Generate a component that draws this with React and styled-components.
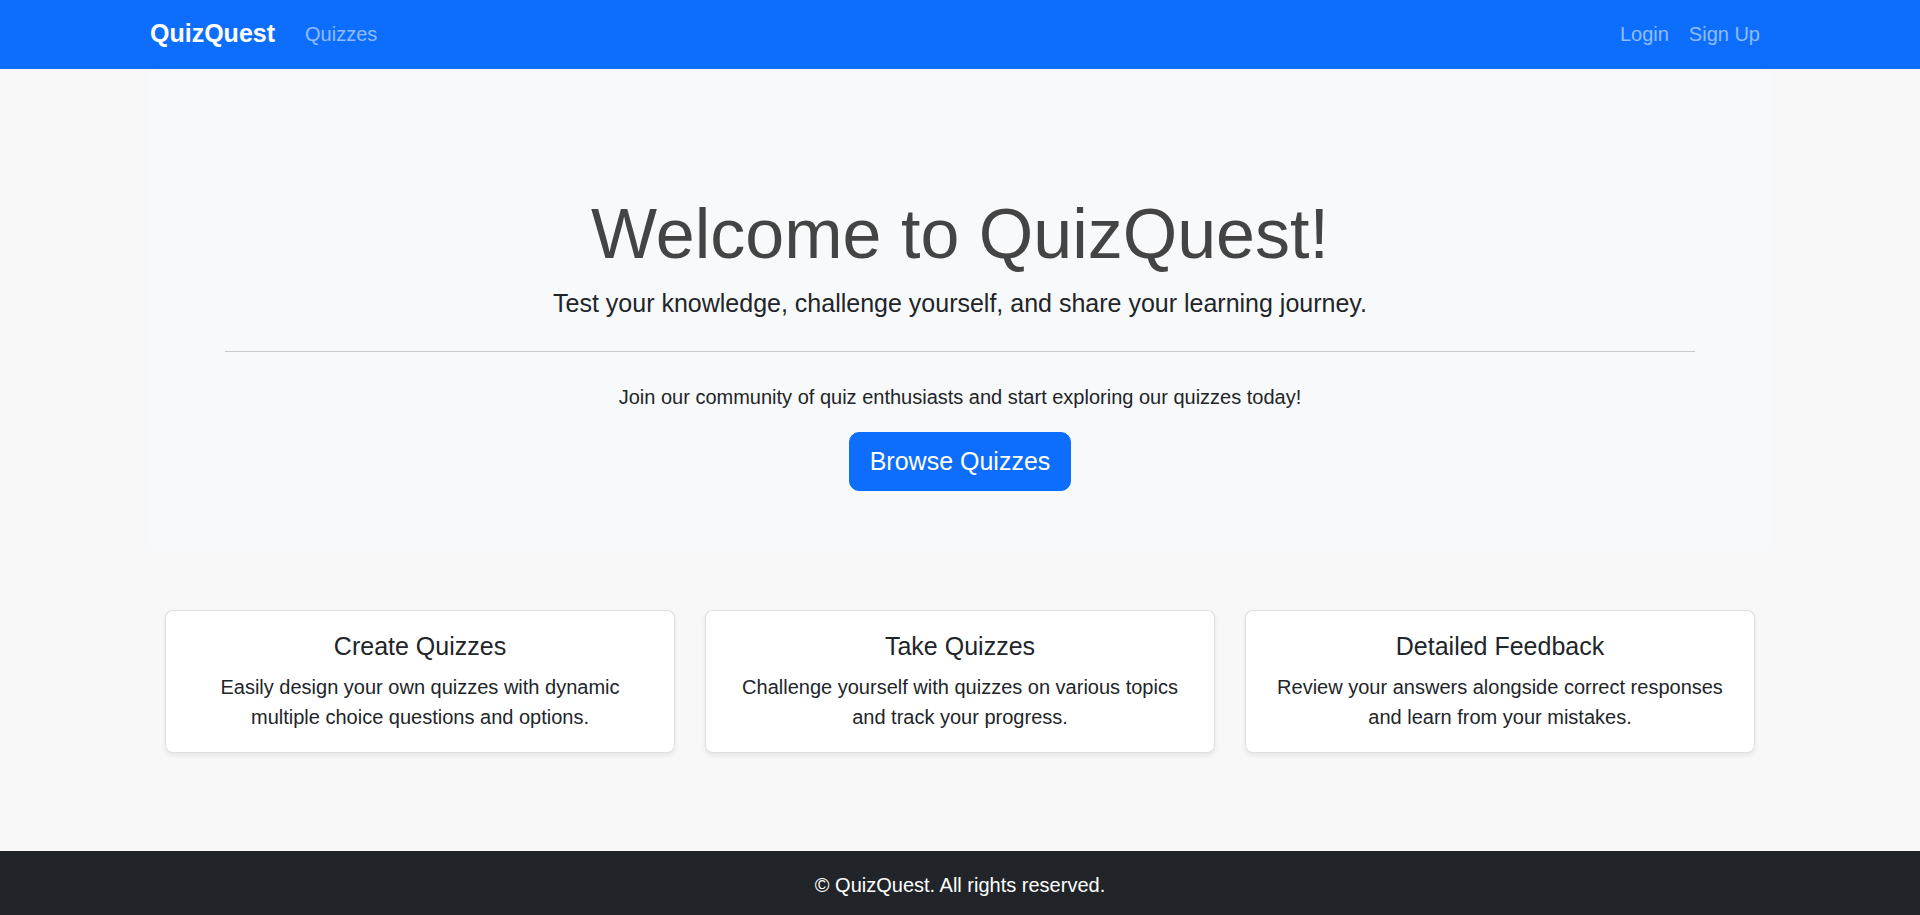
import React from "react";
import styled, { createGlobalStyle } from "styled-components";

const GlobalStyle = createGlobalStyle`
  * { box-sizing: border-box; }
  body {
    margin: 0;
    font-family: "Liberation Sans", Arial, sans-serif;
    color: #212529;
    background: #f8f8f8;
  }
`;

const Page = styled.div`
  min-height: 100vh;
  display: flex;
  flex-direction: column;
`;

const Navbar = styled.nav`
  height: 69px;
  background: #0d6efd;
`;

const NavInner = styled.div`
  width: 1650px;
  margin: 0 auto;
  padding: 0 15px 2px;
  height: 100%;
  display: flex;
  align-items: center;
`;

const Brand = styled.a`
  color: #fff;
  font-size: 25px;
  font-weight: 700;
  line-height: 1.5;
  margin-right: 20px;
  text-decoration: none;
`;

const NavLinks = styled.div`
  display: flex;
  align-items: center;
  margin-left: ${({ $right }) => ($right ? "auto" : "0")};
`;

const NavLink = styled.a`
  color: rgba(255, 255, 255, 0.55);
  font-size: 20px;
  line-height: 1.5;
  padding: 0 10px;
  text-decoration: none;
`;

const Main = styled.main`
  flex: 1;
`;

const Container = styled.div`
  width: 1650px;
  margin: 0 auto;
  padding: 0 15px;
`;

const Hero = styled.section`
  background: #f8f9fa;
  padding: 123px 75px 60px;
  text-align: center;
`;

const Title = styled.h1`
  margin: 0 0 9px;
  font-size: 70px;
  font-weight: 300;
  line-height: 1.2;
  color: #444;
`;

const Lead = styled.p`
  margin: 0;
  font-size: 25px;
  line-height: 1.5;
  color: #212529;
`;

const Rule = styled.hr`
  margin: 28px 0 30px;
  border: 0;
  border-top: 1px solid #c8c9ca;
`;

const Text = styled.p`
  margin: 0 0 20px;
  font-size: 20px;
  line-height: 1.5;
`;

const Button = styled.a`
  display: inline-block;
  background: #0d6efd;
  color: #fff;
  font-size: 25px;
  line-height: 1.5;
  padding: 10px 20px;
  border: 1px solid #0d6efd;
  border-radius: 10px;
  text-decoration: none;
`;

const Features = styled.div`
  display: grid;
  grid-template-columns: repeat(3, 1fr);
  gap: 30px;
  padding: 0 15px;
  margin-top: 59px;
`;

const Card = styled.div`
  background: #fff;
  border: 1px solid rgba(0, 0, 0, 0.12);
  border-radius: 8px;
  box-shadow: 0 2.5px 5px rgba(0, 0, 0, 0.075);
  padding: 20px;
  text-align: center;
`;

const CardTitle = styled.h5`
  margin: 0 0 10px;
  font-size: 25px;
  font-weight: 400;
  line-height: 31px;
`;

const CardText = styled.p`
  margin: 0;
  font-size: 20px;
  line-height: 1.5;
`;

const Footer = styled.footer`
  background: #212529;
  color: #fff;
  text-align: center;
  padding: 19px 0 15px;
  font-size: 20px;
  line-height: 1.5;
`;

const features = [
  {
    title: "Create Quizzes",
    text: "Easily design your own quizzes with dynamic multiple choice questions and options.",
  },
  {
    title: "Take Quizzes",
    text: "Challenge yourself with quizzes on various topics and track your progress.",
  },
  {
    title: "Detailed Feedback",
    text: "Review your answers alongside correct responses and learn from your mistakes.",
  },
];

export default function App() {
  return (
    <Page>
      <GlobalStyle />
      <Navbar>
        <NavInner>
          <Brand href="#">QuizQuest</Brand>
          <NavLinks>
            <NavLink href="#">Quizzes</NavLink>
          </NavLinks>
          <NavLinks $right>
            <NavLink href="#">Login</NavLink>
            <NavLink href="#">Sign Up</NavLink>
          </NavLinks>
        </NavInner>
      </Navbar>
      <Main>
        <Container>
          <Hero>
            <Title>Welcome to QuizQuest!</Title>
            <Lead>
              Test your knowledge, challenge yourself, and share your learning
              journey.
            </Lead>
            <Rule />
            <Text>
              Join our community of quiz enthusiasts and start exploring our
              quizzes today!
            </Text>
            <Button href="#">Browse Quizzes</Button>
          </Hero>
          <Features>
            {features.map((f) => (
              <Card key={f.title}>
                <CardTitle>{f.title}</CardTitle>
                <CardText>{f.text}</CardText>
              </Card>
            ))}
          </Features>
        </Container>
      </Main>
      <Footer>© QuizQuest. All rights reserved.</Footer>
    </Page>
  );
}
